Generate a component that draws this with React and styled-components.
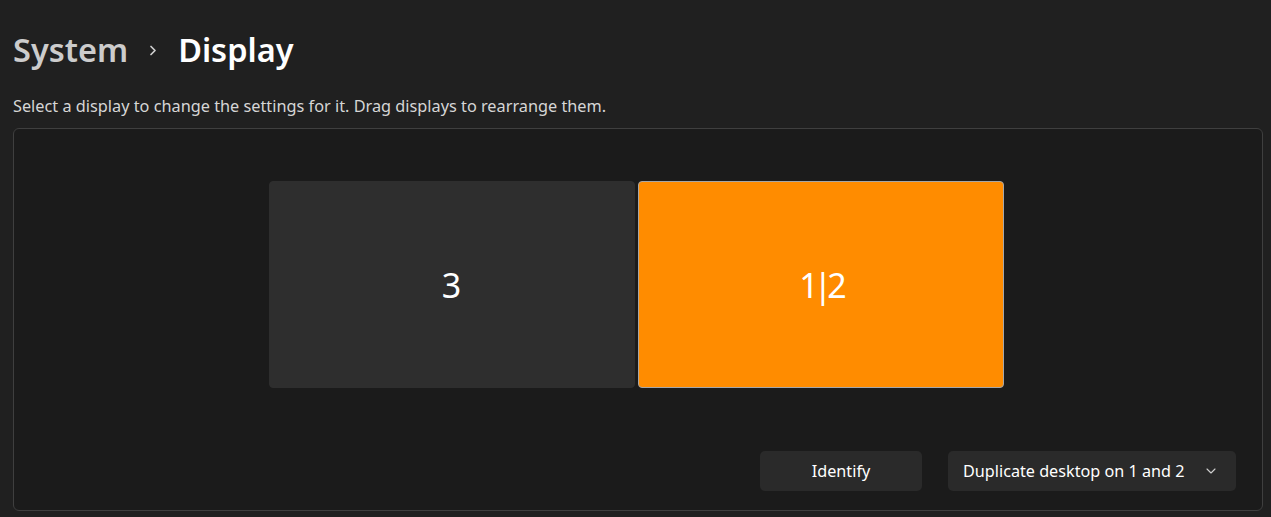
import React from "react";
import styled, { createGlobalStyle } from "styled-components";

const Global = createGlobalStyle`
  html, body { margin: 0; padding: 0; background: #202020; }
  body { font-family: "Segoe UI", "Noto Sans", "Open Sans", sans-serif; color: #fff; }
`;

const Page = styled.div`
  width: 1271px;
  height: 517px;
  box-sizing: border-box;
  padding: 26px 8px 0 13px;
  background: #202020;
  overflow: hidden;
`;

const Breadcrumb = styled.h1`
  margin: 0;
  display: flex;
  align-items: center;
  font-size: 32.5px;
  font-weight: 600;
  line-height: 48px;
  height: 48px;
`;

const Crumb = styled.span`
  color: ${(p) => (p.$current ? "#ffffff" : "#cccccc")};
  font-weight: 600;
`;

const Sep = styled.span`
  display: inline-flex;
  width: 50px;
  justify-content: center;
  color: #cfcfcf;
`;

const Subtitle = styled.p`
  margin: 21px 0 0;
  font-size: 16.3px;
  line-height: 22px;
  color: #d6d6d6;
`;

const Panel = styled.section`
  margin-top: 11px;
  width: 1250px;
  height: 383px;
  box-sizing: border-box;
  background: #1b1b1b;
  border: 1px solid #3f3f3f;
  border-radius: 6px;
  display: flex;
  flex-direction: column;
  padding: 52px 26px 19px;
`;

const Arrangement = styled.div`
  display: flex;
  justify-content: center;
  gap: 3px;
  padding-right: 4px;
`;

const Monitor = styled.div`
  width: 366px;
  height: 207px;
  box-sizing: border-box;
  border-radius: 4px;
  display: flex;
  align-items: center;
  justify-content: center;
  font-size: 34px;
  font-weight: 400;
  letter-spacing: ${(p) => (p.$selected ? "-5px" : "0")};
  color: #fff;
  background: ${(p) => (p.$selected ? "#ff8c00" : "#2e2e2e")};
  border: 1px solid ${(p) => (p.$selected ? "#a7a7a7" : "#2e2e2e")};
`;

const Actions = styled.div`
  margin-top: auto;
  display: flex;
  justify-content: flex-end;
  gap: 26px;
`;

const Button = styled.button`
  height: 40px;
  width: ${(p) => p.$w}px;
  box-sizing: border-box;
  border: none;
  border-radius: 5px;
  background: #2a2a2a;
  color: #fff;
  font-family: inherit;
  font-size: 16.2px;
  display: flex;
  align-items: center;
  justify-content: ${(p) => (p.$dropdown ? "space-between" : "center")};
  padding: ${(p) => (p.$dropdown ? "0 20px 0 15px" : "0")};
`;

const Chevron = () => (
  <svg width="10" height="6" viewBox="0 0 10 6" fill="none">
    <path d="M1 1l4 4 4-4" stroke="#cfcfcf" strokeWidth="1.1" strokeLinecap="round" strokeLinejoin="round" />
  </svg>
);

const ChevronRight = () => (
  <svg width="8" height="13" viewBox="0 0 8 13" fill="none">
    <path d="M2 2.5l4 4-4 4" stroke="#cfcfcf" strokeWidth="1.7" strokeLinecap="round" strokeLinejoin="round" />
  </svg>
);

export default function App() {
  return (
    <>
      <Global />
      <Page>
        <Breadcrumb>
          <Crumb>System</Crumb>
          <Sep><ChevronRight /></Sep>
          <Crumb $current>Display</Crumb>
        </Breadcrumb>
        <Subtitle>Select a display to change the settings for it. Drag displays to rearrange them.</Subtitle>
        <Panel>
          <Arrangement>
            <Monitor>3</Monitor>
            <Monitor $selected>1|2</Monitor>
          </Arrangement>
          <Actions>
            <Button $w={162}>Identify</Button>
            <Button $w={288} $dropdown>
              <span>Duplicate desktop on 1 and 2</span>
              <Chevron />
            </Button>
          </Actions>
        </Panel>
      </Page>
    </>
  );
}
